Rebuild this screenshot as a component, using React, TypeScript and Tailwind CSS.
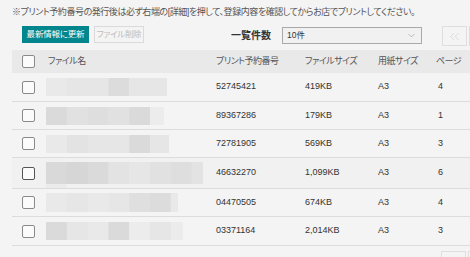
import React from "react";
import { ChevronDown, ChevronsLeft } from "lucide-react";

type Row = {
  no: string;
  size: string;
  paper: string;
  page: string;
  w: number;
  h: number;
  rowH: string;
  tiles: string[];
  extra?: boolean;
  hover?: boolean;
};

const rows: Row[] = [
  { no: "52745421", size: "419KB", paper: "A3", page: "4", w: 121, h: 18, rowH: "h-[29px]", tiles: ["#e9e9e9", "#e6e6e6", "#e6e6e6", "#dcdcdc", "#e6e6e6", "#e6e6e6"] },
  { no: "89367286", size: "179KB", paper: "A3", page: "1", w: 118, h: 18, rowH: "h-[28px]", tiles: ["#dadada", "#e1e1e1", "#dedede", "#e1e1e1", "#dadada", "#ececec"] },
  { no: "72781905", size: "569KB", paper: "A3", page: "3", w: 123, h: 18, rowH: "h-[28px]", tiles: ["#e9e9e9", "#e3e3e3", "#e6e6e6", "#e6e6e6", "#dadada", "#e6e6e6"] },
  { no: "46632270", size: "1,099KB", paper: "A3", page: "6", w: 157, h: 22, rowH: "h-[31px]", tiles: ["#d9d9d9", "#d6d6d6", "#dadada", "#e3e3e3", "#e6e6e6", "#e1e1e1", "#dedede", "#e3e3e3"], extra: true, hover: true },
  { no: "04470505", size: "674KB", paper: "A3", page: "4", w: 132, h: 19, rowH: "h-[28px]", tiles: ["#e9e9e9", "#e6e6e6", "#e9e9e9", "#e6e6e6", "#dfdfdf", "#dcdcdc", "#e9e9e9"] },
  { no: "03371164", size: "2,014KB", paper: "A3", page: "3", w: 137, h: 18, rowH: "h-[29px]", tiles: ["#dadada", "#e6e6e6", "#e9e9e9", "#dadada", "#ececec", "#e6e6e6", "#ececec"] },
];

const JP = "font-['Liberation_Sans','Noto_Sans_CJK_JP',sans-serif] [font-feature-settings:'palt']";
const NUM = "font-['Liberation_Sans',Arial,sans-serif]";

function Mosaic({ r }: { r: Row }) {
  const tw = 20.8;
  const totalH = r.extra ? r.h + 4 : r.h;
  return (
    <svg width={r.w} height={totalH} className="block" style={{ marginTop: r.extra ? 4 : 0 }}>
      {r.tiles.map((c, i) => {
        const x = i * tw;
        const w = Math.min(tw, r.w - x);
        if (w <= 0) return null;
        return <rect key={i} x={x} y={0} width={w + 0.5} height={r.h} fill={c} />;
      })}
      {r.extra && <rect x={0} y={r.h} width={tw} height={4} fill="#ebebeb" />}
    </svg>
  );
}

function Checkbox({ dark }: { dark?: boolean }) {
  return (
    <div
      className={
        dark
          ? "w-[13px] h-[13px] rounded-[2px] border border-[#555] bg-[#fbfbfb]"
          : "w-[13px] h-[13px] rounded-[2px] border border-[#8a8a8a] bg-[#fbfbfb]"
      }
    />
  );
}

export default function App() {
  return (
    <div className="w-[470px] h-[257px] overflow-hidden bg-[#f4f4f4] pl-[12px] text-[#333]">
      <div className={`${JP} pt-[6px] h-[26px] text-[9px] tracking-[-0.45px] leading-[13px] text-[#555] whitespace-nowrap`}>
        ※プリント予約番号の発行後は必ず右端の[詳細]を押して、登録内容を確認してからお店でプリントしてください。
      </div>
      <div className="flex items-start h-[24px] pl-[10px] w-[500px]">
        <div className={`${JP} shrink-0 w-[67px] h-[17px] bg-[#00868c] text-white text-[8.5px] tracking-[-0.2px] flex items-center justify-center whitespace-nowrap`}>
          最新情報に更新
        </div>
        <div className={`${JP} shrink-0 ml-[5px] w-[50px] h-[17px] border border-[#dadada] text-[#bdbdbd] text-[8.5px] tracking-[-0.3px] flex items-center justify-center whitespace-nowrap`}>
          ファイル削除
        </div>
        <div className={`${JP} shrink-0 ml-[87px] mt-[1px] h-[17px] flex items-center text-[10px] font-bold text-[#333] whitespace-nowrap`}>
          一覧件数
        </div>
        <div className={`${JP} shrink-0 ml-[11px] mt-[1px] w-[140px] h-[17px] border border-[#a9a9a9] bg-[#f1f1f1] flex items-center justify-between pl-[4px] pr-[4px] text-[8.5px] text-[#333]`}>
          <span>10件</span>
          <ChevronDown size={11} strokeWidth={1} color="#777" />
        </div>
        <div className="ml-[20px] w-[25px] h-[20px] border border-[#dedede] bg-[#f4f4f4] flex items-center justify-center shrink-0">
          <ChevronsLeft size={15} strokeWidth={1} color="#c8c8c8" />
        </div>
        <div className="ml-[2px] w-[25px] h-[20px] border border-[#dedede] bg-[#f4f4f4] shrink-0" />
      </div>

      <div className="w-[470px]">
        <div className={`${JP} grid grid-cols-[34px_170px_89px_73px_58px_46px] items-center h-[23px] bg-[#e9e9e9] text-[9px] tracking-[-0.5px] text-[#555]`}>
          <div className="pl-[10px]"><Checkbox /></div>
          <div className="pl-[2px] whitespace-nowrap">ファイル名</div>
          <div className="whitespace-nowrap">プリント予約番号</div>
          <div className="whitespace-nowrap">ファイルサイズ</div>
          <div className="whitespace-nowrap">用紙サイズ</div>
          <div className="whitespace-nowrap">ページ</div>
        </div>
        {rows.map((r, i) => (
          <div
            key={i}
            className={`grid grid-cols-[34px_170px_89px_73px_58px_46px] items-center border-b border-[#dcdcdc] ${r.rowH} ${r.hover ? "bg-[#f1f1f1]" : ""} ${NUM} text-[9px] text-[#333]`}
          >
            <div className="pl-[10px]"><Checkbox dark={r.hover} /></div>
            <div><Mosaic r={r} /></div>
            <div>{r.no}</div>
            <div>{r.size}</div>
            <div>{r.paper}</div>
            <div className="pl-[2px]">{r.page}</div>
          </div>
        ))}
        <div className="flex h-[20px] pt-[5px]">
          <div className="ml-[429px] w-[25px] h-[20px] border border-[#dedede] bg-[#f4f4f4] shrink-0" />
          <div className="ml-[2px] w-[25px] h-[20px] border border-[#dedede] bg-[#f4f4f4] shrink-0" />
        </div>
      </div>
    </div>
  );
}
